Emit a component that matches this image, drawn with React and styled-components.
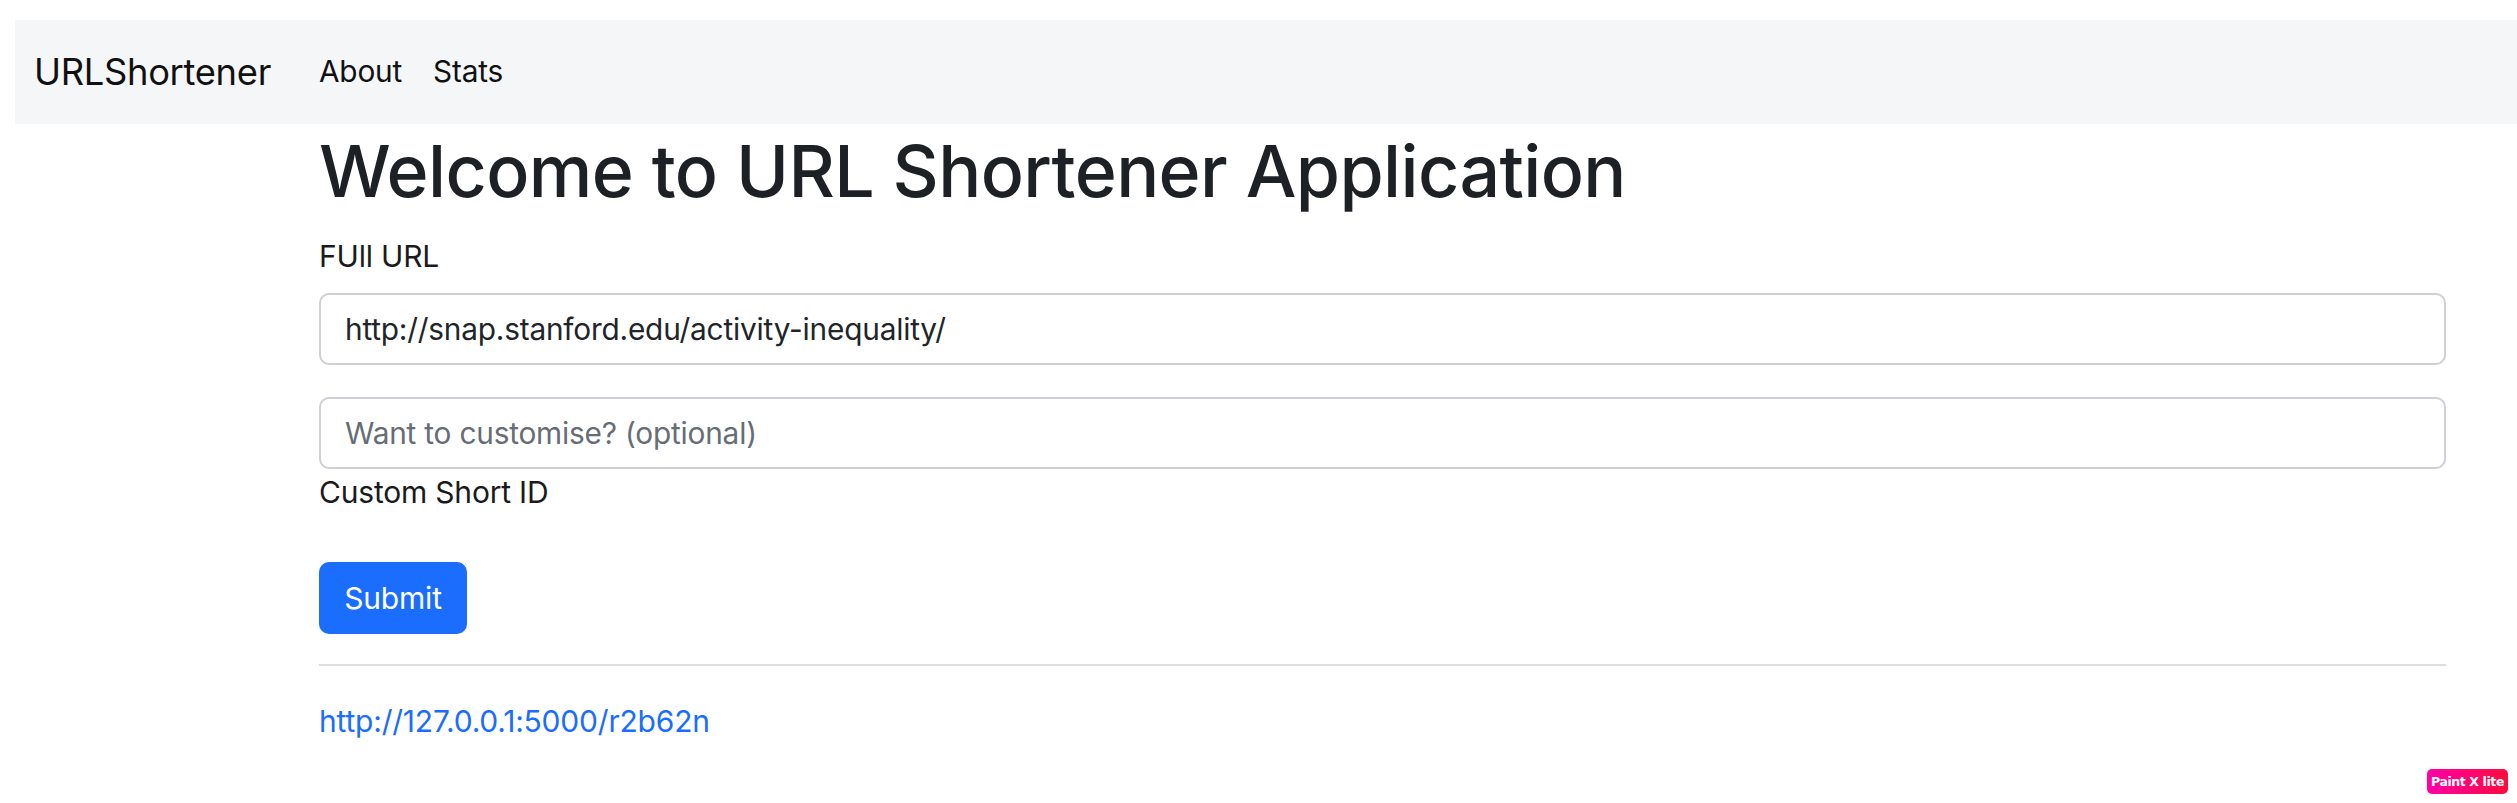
import styled, { createGlobalStyle } from 'styled-components';

const GlobalStyle = createGlobalStyle`
  * {
    box-sizing: border-box;
  }
  body {
    margin: 0;
    background: #fff;
    font-family: Inter, 'Liberation Sans', sans-serif;
    color: #212529;
  }
`;

const Page = styled.div`
  position: relative;
  width: 2517px;
  height: 803px;
  padding: 20px 0 0 15px;
  overflow: hidden;
`;

const Navbar = styled.nav`
  display: flex;
  align-items: center;
  height: 104px;
  padding-left: 19px;
  background: #f5f6f8;
`;

const Brand = styled.a`
  font-size: 36.3px;
  line-height: 1;
  color: #111;
  text-decoration: none;
  margin-right: 48px;
  letter-spacing: -0.3px;
`;

const NavLinks = styled.div`
  display: flex;
  gap: 31px;
`;

const NavLink = styled.a`
  font-size: 29.8px;
  line-height: 1;
  color: #111;
  text-decoration: none;
  letter-spacing: -0.2px;
`;

const Main = styled.main`
  width: 2127px;
  margin-left: 304px;
`;

const Title = styled.h1`
  margin: 0 0 16px;
  font-size: 71.6px;
  line-height: 94px;
  font-weight: 500;
  color: #1d2024;
  letter-spacing: -0.6px;
`;

const Label = styled.label`
  display: block;
  font-size: 30px;
  line-height: 44px;
  color: #1a1a1a;
  margin-bottom: ${({ $mb }) => $mb || 0}px;
  letter-spacing: -0.2px;
`;

const Input = styled.input`
  display: block;
  width: 100%;
  height: 72px;
  padding: 0 24px;
  margin-bottom: ${({ $mb }) => $mb || 0}px;
  font-family: inherit;
  font-size: 29.8px;
  color: #212529;
  background: #fff;
  border: 2px solid #cdd1d6;
  border-radius: 10px;
  outline: none;
  letter-spacing: -0.2px;

  &::placeholder {
    color: #666d75;
  }
`;

const SubmitButton = styled.button`
  display: block;
  width: 148px;
  height: 72px;
  margin-top: 48px;
  padding: 0;
  font-family: inherit;
  font-size: 30px;
  color: #fff;
  background: #1a6dfd;
  border: none;
  border-radius: 10px;
  letter-spacing: -0.2px;
`;

const Divider = styled.hr`
  margin: 30px 0 33px;
  border: none;
  border-top: 2px solid #dedede;
`;

const ShortLink = styled.a`
  display: block;
  font-size: 30px;
  line-height: 44px;
  color: #1a6dfd;
  text-decoration: none;
  letter-spacing: -0.2px;
`;

const Watermark = styled.div`
  position: absolute;
  left: 2427px;
  top: 769px;
  width: 81px;
  height: 25px;
  display: flex;
  align-items: center;
  justify-content: center;
  border-radius: 5px;
  background: linear-gradient(to right, #ff00a8, #ff0a3c);
  color: #fff;
  font-family: 'DejaVu Sans', sans-serif;
  font-size: 12.5px;
  font-weight: 700;
  letter-spacing: -0.4px;
`;

const App = () => {
  return (
    <>
      <GlobalStyle />
      <Page>
        <Navbar>
          <Brand href="#">URLShortener</Brand>
          <NavLinks>
            <NavLink href="#">About</NavLink>
            <NavLink href="#">Stats</NavLink>
          </NavLinks>
        </Navbar>
        <Main>
          <Title>Welcome to URL Shortener Application</Title>
          <form onSubmit={(e) => e.preventDefault()}>
            <Label $mb={15}>FUll URL</Label>
            <Input
              $mb={32}
              defaultValue="http://snap.stanford.edu/activity-inequality/"
            />
            <Input $mb={1} placeholder="Want to customise? (optional)" />
            <Label>Custom Short ID</Label>
            <SubmitButton type="submit">Submit</SubmitButton>
          </form>
          <Divider />
          <ShortLink href="#">http://127.0.0.1:5000/r2b62n</ShortLink>
        </Main>
        <Watermark>Paint X lite</Watermark>
      </Page>
    </>
  );
};

export default App;
